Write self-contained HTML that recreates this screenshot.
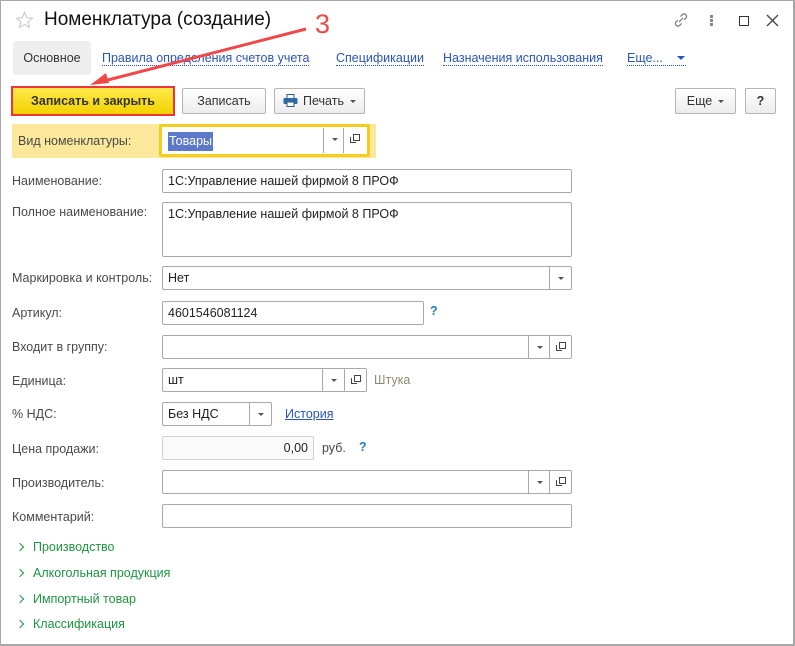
<!DOCTYPE html>
<html><head><meta charset="utf-8"><style>
*{box-sizing:border-box;margin:0;padding:0}
body{width:795px;height:646px;background:#fff;font-family:"Liberation Sans",sans-serif;font-size:12.5px;color:#333;position:relative;overflow:hidden}
.frame{position:absolute;left:0;top:0;width:795px;height:646px;border:1px solid #a8a8a8;border-right:2px solid #a8a8a8;border-bottom:2px solid #a8a8a8}
.a{position:absolute;white-space:nowrap}
.lbl{position:absolute;left:12px;color:#4a4a4a;font-size:12.5px;white-space:nowrap}
.f{position:absolute;left:162px;height:24px;border:1px solid #a9a9a9;border-radius:2px;background:#fff;padding:0 5px;line-height:22px;color:#222;font-size:12.5px;white-space:nowrap}
.dd{position:absolute;top:0;width:22px;height:22px;border-left:1px solid #a9a9a9}
.dd:after{content:"";position:absolute;left:8px;top:10px;border-left:3px solid transparent;border-right:3px solid transparent;border-top:3px solid #555}
.op{position:absolute;top:0;width:22px;height:22px;border-left:1px solid #a9a9a9}
.op:before{content:"";position:absolute;left:9px;top:6px;width:5px;height:5px;border:1px solid #444;background:#fff}
.op:after{content:"";position:absolute;left:6px;top:9px;width:5px;height:5px;border-left:1px solid #444;border-bottom:1px solid #444}
.lnk{position:absolute;color:#2a55b8;font-size:12.5px;border-bottom:1px dotted #2a55b8;line-height:14px;white-space:nowrap}
.btn{position:absolute;top:88px;height:26px;border:1px solid #b5b5b5;border-radius:2px;background:linear-gradient(#fff,#ececec);line-height:24px;text-align:center;color:#333;font-size:12.5px;white-space:nowrap}
.arr{display:inline-block;margin-left:6px;vertical-align:middle;border-left:3px solid transparent;border-right:3px solid transparent;border-top:3px solid #555}
.grp{position:absolute;left:17px;color:#1e9640;font-size:12.5px;white-space:nowrap}
.grp i{display:inline-block;width:6px;height:6px;border-right:1.5px solid #1e9640;border-top:1.5px solid #1e9640;transform:rotate(45deg);margin-right:10px;position:relative;top:-1px}
</style></head><body>
<div class="frame"></div>
<svg class="a" style="left:15px;top:11px" width="19" height="19" viewBox="0 0 19 19"><path d="M9.5 1.5l2.3 5.2 5.6.5-4.3 3.7 1.3 5.5-4.9-2.9-4.9 2.9 1.3-5.5L1.6 7.2l5.6-.5z" fill="none" stroke="#c4c4c4" stroke-width="1"/></svg>
<div class="a" style="left:44px;top:9px;font-size:19px;color:#111">Номенклатура (создание)</div>
<svg class="a" style="left:671px;top:10px" width="20" height="20" viewBox="0 0 20 20"><g fill="none" stroke="#777" stroke-width="1.2"><path d="M8 12l4-4"/><path d="M9.5 6.5l2-2a2.5 2.5 0 013.5 3.5l-2 2"/><path d="M10.5 13.5l-2 2A2.5 2.5 0 015 12l2-2"/></g></svg>
<div class="a" style="left:710px;top:15px;width:3px;height:3px;background:#888;box-shadow:0 4px #888,0 8px #888"></div>
<div class="a" style="left:739px;top:16px;width:10px;height:10px;border:1.5px solid #333"></div>
<svg class="a" style="left:766px;top:14px" width="14" height="14"><path d="M1 1l11 11M12 1L1 12" stroke="#444" stroke-width="1.3"/></svg>

<div class="a" style="left:13px;top:41px;width:78px;height:34px;background:#eeeeee;border-radius:3px;line-height:34px;text-align:center;color:#333;font-size:12.5px">Основное</div>
<div class="lnk" style="left:102px;top:51px">Правила определения счетов учета</div>
<div class="lnk" style="left:336px;top:51px">Спецификации</div>
<div class="lnk" style="left:443px;top:51px">Назначения использования</div>
<div class="lnk" style="left:627px;top:51px;width:59px">Еще...<span style="position:absolute;left:50px;top:5px;border-left:4px solid transparent;border-right:4px solid transparent;border-top:4px solid #2a55b8"></span></div>

<div class="a" style="left:11px;top:86px;width:164px;height:30px;border:2px solid #f0343c;background:linear-gradient(#ffe94a,#f2d200);padding:0;line-height:26px;text-align:center;font-weight:bold;color:#333;font-size:12.5px">Записать и закрыть</div>
<div class="btn" style="left:182px;width:84px">Записать</div>
<div class="btn" style="left:274px;width:91px"><svg style="vertical-align:middle;margin-right:5px;margin-top:-3px" width="15" height="13" viewBox="0 0 15 13"><rect x="4" y="0.5" width="7" height="4" fill="#fff" stroke="#2d5a8a"/><rect x="0.5" y="4" width="14" height="6" rx="1" fill="#2d6aa8"/><rect x="4" y="8" width="7" height="4.5" fill="#fff" stroke="#2d5a8a"/></svg>Печать<span class="arr"></span></div>
<div class="btn" style="left:675px;width:61px">Еще<span class="arr"></span></div>
<div class="btn" style="left:745px;width:31px;font-weight:bold">?</div>

<div class="a" style="left:12px;top:124px;width:364px;height:34px;background:#fbe89a"></div>
<div class="a" style="left:18px;top:134px;color:#4a4a4a">Вид номенклатуры:</div>
<div class="a" style="left:159px;top:124px;width:211px;height:33px;border:3px solid #f6cd1e;background:#fff;border-radius:2px">
 <div class="a" style="left:6px;top:5px;height:19px;line-height:19px;background:#5b79c8;color:#fff;padding:0 1px;font-size:12.5px">Товары</div>
 <div class="dd" style="left:161px;top:1px;height:25px"></div>
 <div class="op" style="left:181px;top:1px;height:25px;border-left:1px solid #aaa"></div>
</div>

<div class="lbl" style="top:174px">Наименование:</div>
<div class="f" style="top:169px;width:410px">1С:Управление нашей фирмой 8 ПРОФ</div>
<div class="lbl" style="top:205px">Полное наименование:</div>
<div class="f" style="top:202px;width:410px;height:55px;line-height:22px">1С:Управление нашей фирмой 8 ПРОФ</div>
<div class="lbl" style="top:271px">Маркировка и контроль:</div>
<div class="f" style="top:266px;width:410px">Нет<div class="dd" style="left:386px"></div></div>
<div class="lbl" style="top:306px">Артикул:</div>
<div class="f" style="top:301px;width:262px">4601546081124</div>
<div class="a" style="left:430px;top:304px;color:#2a7ac0;font-weight:bold">?</div>
<div class="lbl" style="top:340px">Входит в группу:</div>
<div class="f" style="top:335px;width:410px"><div class="dd" style="left:365px"></div><div class="op" style="left:386px"></div></div>
<div class="lbl" style="top:374px">Единица:</div>
<div class="f" style="top:368px;width:205px">шт<div class="dd" style="left:159px"></div><div class="op" style="left:181px"></div></div>
<div class="a" style="left:374px;top:373px;color:#8a8a70">Штука</div>
<div class="lbl" style="top:407px">% НДС:</div>
<div class="f" style="top:402px;width:110px">Без НДС<div class="dd" style="left:86px"></div></div>
<div class="a" style="left:285px;top:407px;color:#2a55b8;text-decoration:underline">История</div>
<div class="lbl" style="top:442px">Цена продажи:</div>
<div class="f" style="top:436px;width:152px;text-align:right;background:#fafafa;border-color:#d0d0d0">0,00</div>
<div class="a" style="left:322px;top:441px;color:#444">руб.</div>
<div class="a" style="left:359px;top:440px;color:#2a7ac0;font-weight:bold">?</div>
<div class="lbl" style="top:476px">Производитель:</div>
<div class="f" style="top:470px;width:410px"><div class="dd" style="left:365px"></div><div class="op" style="left:386px"></div></div>
<div class="lbl" style="top:510px">Комментарий:</div>
<div class="f" style="top:504px;width:410px"></div>

<div class="grp" style="top:540px"><i></i>Производство</div>
<div class="grp" style="top:566px"><i></i>Алкогольная продукция</div>
<div class="grp" style="top:592px"><i></i>Импортный товар</div>
<div class="grp" style="top:617px"><i></i>Классификация</div>

<svg class="a" style="left:0;top:0" width="340" height="100"><line x1="306" y1="29" x2="100" y2="82" stroke="#f04848" stroke-width="3"/><path d="M90 85l16-12 3 10z" fill="#f04848"/></svg>
<div class="a" style="left:315px;top:9px;font-size:27px;color:#f04848">3</div>
</body></html>
